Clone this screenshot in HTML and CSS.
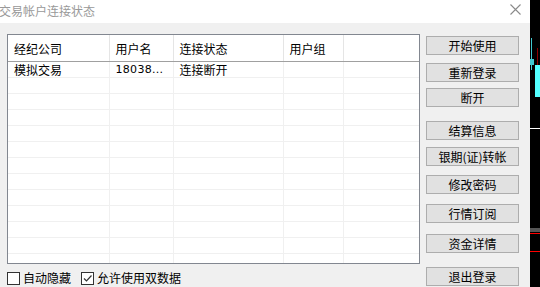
FILE: index.html
```html
<!DOCTYPE html>
<html>
<head>
  <meta charset="utf-8">
  <title>交易帐户连接状态</title>
  <link rel="stylesheet" href="styles.css">
</head>
<body>
  <div class="dialog">
    <div class="titlebar">
      <span class="title">交易帐户连接状态</span>
      <svg class="close" width="11" height="11" viewBox="0 0 11 11">
        <path d="M0.5 0.5 L10.5 10.5 M10.5 0.5 L0.5 10.5" stroke="#8a8a8a" stroke-width="1.1" fill="none"/>
      </svg>
    </div>
    <div class="content">
      <div class="left">
        <div class="list">
          <table>
            <colgroup>
              <col class="c1"><col class="c2"><col class="c3"><col class="c4"><col>
            </colgroup>
            <thead>
              <tr>
                <th>经纪公司</th>
                <th>用户名</th>
                <th>连接状态</th>
                <th>用户组</th>
                <th class="last"></th>
              </tr>
            </thead>
            <tbody id="rows">
              <tr>
                <td>模拟交易</td>
                <td class="num">18038...</td>
                <td>连接断开</td>
                <td></td>
                <td class="last"></td>
              </tr>
            </tbody>
          </table>
        </div>
        <div class="options">
          <label class="check"><span class="box"></span>自动隐藏</label>
          <label class="check"><span class="box checked">
            <svg width="11" height="11" viewBox="0 0 11 11"><path d="M2 5.5 L4.5 8 L9.5 2.5" stroke="#333" stroke-width="1.2" fill="none"/></svg>
          </span>允许使用双数据</label>
        </div>
      </div>
      <div class="buttons">
        <button class="b1">开始使用</button>
        <button class="b2">重新登录</button>
        <button class="b3">断开</button>
        <button class="b4">结算信息</button>
        <button class="b5">银期(证)转帐</button>
        <button class="b6">修改密码</button>
        <button class="b7">行情订阅</button>
        <button class="b8">资金详情</button>
        <button class="b9">退出登录</button>
      </div>
    </div>
  </div>
  <div class="chart">
    <div class="bar cyan-thin"></div>
    <div class="bar cyan-block"></div>
    <div class="bar red-line"></div>
    <div class="bar cyan-wide"></div>
    <div class="bar white-h"></div>
    <div class="bar gray-h"></div>
    <div class="bar red-box"></div>
  </div>

  <script>
    // fill the empty rows of the list
    const rows = document.getElementById('rows');
    for (let i = 0; i < 13; i++) {
      const tr = document.createElement('tr');
      tr.innerHTML = '<td></td><td></td><td></td><td></td><td class="last"></td>';
      rows.appendChild(tr);
    }
  </script>
</body>
</html>
```

FILE: styles.css
```css
body {
  margin: 0;
  width: 540px;
  height: 287px;
  overflow: hidden;
  display: flex;
  font-family: "Noto Sans CJK SC", "Liberation Sans", sans-serif;
  font-size: 12px;
  color: #000;
}

.dialog {
  width: 530px;
  height: 287px;
  background-color: #f0f0f0;
  display: flex;
  flex-direction: column;
}

.titlebar {
  height: 23px;
  background-color: #ffffff;
  display: flex;
  align-items: center;
  justify-content: space-between;
  padding-right: 9px;
}

.title {
  color: #999999;
  margin-left: -1px;
  line-height: 14px;
  margin-top: -2px;
}

.close {
  margin-top: -4px;
}

.content {
  display: flex;
  flex: 1;
}

.left {
  padding-left: 7px;
  padding-top: 11px;
  width: 413px;
}

.list {
  width: 411px;
  height: 228px;
  border: 1px solid #828790;
  background-color: #ffffff;
  overflow: hidden;
}

table {
  border-collapse: collapse;
  table-layout: fixed;
  width: 411px;
}

.c1 { width: 101px; }
.c2 { width: 64px; }
.c3 { width: 110px; }
.c4 { width: 60px; }

th {
  height: 24px;
  padding: 0 0 0 6px;
  font-weight: normal;
  text-align: left;
  border-right: 1px solid #e5e5e5;
  border-bottom: 1px solid #a0a0a0;
  white-space: nowrap;
  line-height: 14px;
  padding-top: 2px;
}

td {
  height: 15px;
  padding: 0 0 0 6px;
  border-right: 1px solid #f0f0f0;
  border-bottom: 1px solid #f0f0f0;
  white-space: nowrap;
  line-height: 14px;
}

.last {
  border-right: none;
}

.num {
  font-family: "DejaVu Sans", sans-serif;
  font-size: 11px;
  letter-spacing: 0.3px;
}

.options {
  display: flex;
  align-items: center;
  gap: 10px;
  margin-top: 7px;
}

.check {
  display: flex;
  align-items: center;
  gap: 3px;
  line-height: 14px;
}

.box {
  width: 11px;
  height: 11px;
  border: 1px solid #333333;
  background-color: #ffffff;
  display: flex;
}

.buttons {
  display: flex;
  flex-direction: column;
  margin-left: 6px;
  padding-top: 13px;
}

.buttons button {
  width: 93px;
  height: 19px;
  padding: 0;
  border: 1px solid #adadad;
  background-color: #e1e1e1;
  font-family: "Noto Sans CJK SC", "Liberation Sans", sans-serif;
  font-size: 12px;
  line-height: 14px;
  color: #000;
}

.b2 { margin-top: 8px; }
.b3 { margin-top: 6px; }
.b4 { margin-top: 14px; }
.b5 { margin-top: 7px; }
.b6 { margin-top: 9px; }
.b7 { margin-top: 10px; }
.b8 { margin-top: 11px; }
.b9 { margin-top: 14px; }

.chart {
  width: 10px;
  height: 287px;
  background-color: #000000;
  position: relative;
}

.bar {
  position: absolute;
}

.cyan-thin { left: 1px; top: 38px; width: 1px; height: 32px; background-color: #40c8d0; }
.cyan-block { left: 0; top: 59px; width: 4px; height: 6px; background-color: #40c8d0; }
.red-line { left: 7px; top: 48px; width: 1px; height: 17px; background-color: #8b0000; }
.cyan-wide { left: 5px; top: 65px; width: 5px; height: 32px; background-color: #54ffff; }
.white-h { left: 0; top: 128px; width: 10px; height: 1px; background-color: #ffffff; }
.gray-h { left: 0; top: 228px; width: 10px; height: 4px; background-color: #555555; }
.red-box { left: 0; top: 233px; width: 10px; height: 19px; border-top: 1px solid #ff0000; border-bottom: 1px solid #ff0000; box-sizing: border-box; }
```
